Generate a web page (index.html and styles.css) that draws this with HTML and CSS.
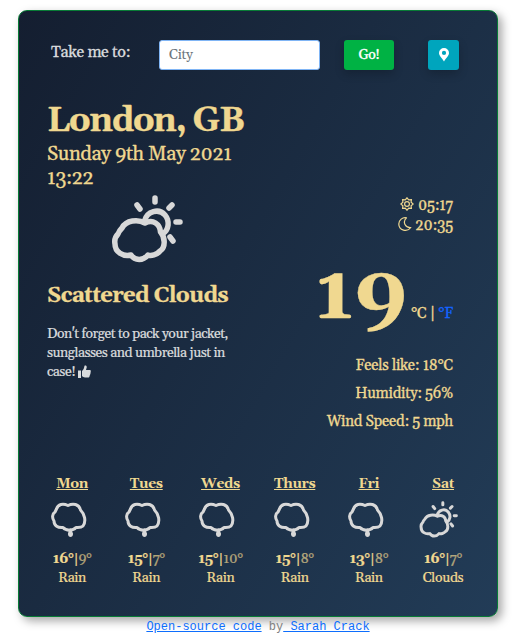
FILE: index.html
```html
<!DOCTYPE html>
<html lang="en">
<head>
<meta charset="utf-8">
<title>Weather</title>
<link rel="stylesheet" href="styles.css">
</head>
<body>
<svg class="defs" width="0" height="0">
  <symbol id="clouds" viewBox="0 0 72 68">
    <g fill="none" stroke="currentColor" stroke-width="5.500" stroke-linecap="round" stroke-linejoin="round">
      <path d="M11 33C15 25 27 24 34 28C42 24 49 29 49.500 37C54 42 55 52 49 56C46 60 40 61 37 60C32 66 24 66 20 60C12 62 4 57 4 49C3 44 5 41 7 39C8 36 9 35 11 33Z"/>
      <path d="M33.500 26C36 16 48 13 54 20C59 26 58 35 51.500 39"/>
      <path stroke-width="5.500" d="M44 3V7M26 10L29 14M61 10L58 13M65 27H69M59 42L62 46"/>
    </g>
  </symbol>
  <symbol id="rain" viewBox="0 0 36 35">
    <path fill="none" stroke="currentColor" stroke-width="3" stroke-linejoin="round" d="M5.500 7C7 2 12 1 17 3.500C22 1 28 2 29.500 8C33.500 12 35.500 19 32 24C30 26 27 25.500 25 25.500C22 29 15 29 12 25.500C7 26 3 24 3 19C1 16 1 12 4 10Z"/>
    <path fill="currentColor" d="M18.500 26.500H20L22 31.500C22.500 36 16.500 36 17 31.500Z"/>
  </symbol>
</svg>
<main class="card">
  <form class="search">
    <label for="city">Take me to:</label>
    <input id="city" type="text" placeholder="City">
    <button class="go" type="button">Go!</button>
    <button class="pin" type="button" aria-label="Current location"><svg width="10" height="14" viewBox="0 0 10 14"><path fill="#fff" fill-rule="evenodd" d="M5 0a5 5 0 0 1 5 5c0 3-3 5-5 8.500C3 10 0 8 0 5a5 5 0 0 1 5-5zM5 2.800a2.100 2.100 0 1 0 0 4.200a2.100 2.100 0 0 0 0-4.200z"/></svg></button>
  </form>
  <h1>London, GB</h1>
  <p class="date">Sunday 9th May 2021<br>13:22</p>
  <section class="now">
    <div class="left">
      <svg class="main-icon" width="72" height="68"><use href="#clouds"/></svg>
      <h2>Scattered Clouds</h2>
      <p class="tip">Don't forget to pack your jacket,<br>sunglasses and umbrella just in<br>case! <svg width="13" height="13" viewBox="0 0 13 13"><path fill="currentColor" d="M0 5.500h3V13H0zM4 6C6 4 6 3 6.500.7C8 0 9 1 8.700 2.500L8 5h3.500c1.500 0 1.700 1.500.9 2c.6.700.3 1.600-.3 2c.3.800 0 1.500-.6 1.800c.2 1-.5 1.700-1.500 1.700H7C5.500 12.500 5 11.500 4 11.300z"/></svg></p>
    </div>
    <div class="right">
      <div class="suntimes">
        <div><svg width="14" height="14" viewBox="0 0 14 14" fill="none" stroke="currentColor" stroke-width="1.200"><path d="M7 .8L8.700 2.900L11.400 2.600L11.100 5.300L13.200 7L11.100 8.700L11.400 11.400L8.700 11.100L7 13.200L5.300 11.100L2.600 11.400L2.900 8.700L.8 7L2.900 5.300L2.600 2.600L5.300 2.900Z"/><circle cx="7" cy="7" r="2.400"/></svg> 05:17</div>
        <div><svg width="14" height="14" viewBox="0 0 14 14" fill="none" stroke="currentColor" stroke-width="1.200" stroke-linejoin="round"><path d="M8.500.8C4.500 0 .8 3 .8 7c0 6.500 8.500 8.500 12 3.500C7.500 11 4 5 8.500.8Z"/></svg> 20:35</div>
      </div>
      <div class="temp"><strong>19</strong><span class="units">°C | <a>°F</a></span></div>
      <div class="details"><div>Feels like: 18°C</div><div>Humidity: 56%</div><div>Wind Speed: 5 mph</div></div>
    </div>
  </section>
  <section class="forecast">
    <div class="day"><h3>Mon</h3><svg class="r" width="36" height="35"><use href="#rain"/></svg><p><b>16°</b>|<i>9°</i></p><p>Rain</p></div>
    <div class="day"><h3>Tues</h3><svg class="r" width="36" height="35"><use href="#rain"/></svg><p><b>15°</b>|<i>7°</i></p><p>Rain</p></div>
    <div class="day"><h3>Weds</h3><svg class="r" width="36" height="35"><use href="#rain"/></svg><p><b>15°</b>|<i>10°</i></p><p>Rain</p></div>
    <div class="day"><h3>Thurs</h3><svg class="r" width="36" height="35"><use href="#rain"/></svg><p><b>15°</b>|<i>8°</i></p><p>Rain</p></div>
    <div class="day"><h3>Fri</h3><svg class="r" width="36" height="35"><use href="#rain"/></svg><p><b>13°</b>|<i>8°</i></p><p>Rain</p></div>
    <div class="day"><h3>Sat</h3><svg class="c" width="39" height="37"><use href="#clouds"/></svg><p><b>16°</b>|<i>7°</i></p><p>Clouds</p></div>
  </section>
</main>
<footer><a>Open-source code</a> by<a> Sarah Crack</a></footer>
</body>
</html>
```
FILE: styles.css
```css
* { box-sizing: border-box; margin: 0; padding: 0; }
body { background: #fff; padding: 10px 16px 0 18px; font-family: Georgia, Gelasio, "Liberation Serif", serif; font-size: 15px; color: #f0d890; overflow: hidden; }
.defs { display: block; }
.card { width: 480px; height: 607px; border: 1px solid #087b36; border-radius: 9px; background: linear-gradient(120deg, #141e30, #223c57); box-shadow: 4px 4px 10px rgba(0, 0, 0, .35); padding: 29px 28px 0; white-space: nowrap; }
.search { display: flex; height: 30px; color: #d9dbdd; }
.search label { width: 112px; padding-left: 4px; font-size: 16px; letter-spacing: -.35px; line-height: 24px; -webkit-text-stroke: .3px; }
.search input { width: 161px; height: 30px; border: 1px solid #80b5f5; border-radius: 3px; padding: 0 9px; font: 14px Georgia, Gelasio, "Liberation Serif", serif; letter-spacing: -.3px; background: #fff; }
.search input::placeholder { color: #6c757d; }
.search button { border: 0; border-radius: 3px; height: 30px; box-shadow: 0 4px 10px rgba(0, 0, 0, .2); display: flex; align-items: center; justify-content: center; }
.search .go { width: 50px; margin-left: 24px; background: #00b244; color: #fff; font: 14px Georgia, Gelasio, "Liberation Serif", serif; letter-spacing: -.4px; -webkit-text-stroke: .3px; }
.search .pin { width: 31px; margin-left: 34px; background: #00a5bd; }
h1 { margin-top: 27px; height: 45px; font-size: 34px; letter-spacing: -1.25px; line-height: 48px; -webkit-text-stroke: .4px; }
.date { font-size: 20px; letter-spacing: -.4px; line-height: 24px; height: 50px; -webkit-text-stroke: .3px; }
.now { display: flex; justify-content: space-between; height: 282px; padding-right: 16px; }
.main-icon { display: block; color: #d8d8d8; margin: 3px 0 0 64px; }
h2 { font-size: 22px; letter-spacing: -.65px; line-height: 28px; margin-top: 19px; -webkit-text-stroke: .3px; }
.tip { color: #d9dbdd; font-size: 14px; letter-spacing: -.52px; word-spacing: .1px; line-height: 19px; margin-top: 15px; -webkit-text-stroke: .2px; }
.tip svg { vertical-align: -2px; }
.right { text-align: right; -webkit-text-stroke: .3px; }
.suntimes { line-height: 20px; padding-top: 4px; letter-spacing: -.15px; }
.suntimes svg { vertical-align: -1px; }
.temp { display: flex; justify-content: flex-end; align-items: baseline; height: 86px; margin-top: 30px; line-height: 60px; letter-spacing: -.3px; }
.temp strong { font-size: 76px; letter-spacing: -1px; margin-right: 5px; transform: scaleX(1.09); transform-origin: right; }
.temp a { color: #1463ff; }
.details { line-height: 28px; letter-spacing: -.25px; }
.forecast { display: grid; grid-template-columns: repeat(6, 74.2px); margin-left: -12px; text-align: center; font-size: 14px; letter-spacing: -.35px; }
.day h3 { font-size: 14px; line-height: 20px; text-decoration: underline; }
.day svg { display: block; color: #d8d8d8; }
.day .r { margin: 8px 0 13px 16px; }
.day .c { margin: 7px 0 12px 13px; }
.day p { line-height: 18.500px; -webkit-text-stroke: .2px; }
.day i { font-style: normal; opacity: .7; }
footer { width: 480px; text-align: center; font: 12px/20px "Liberation Mono", monospace; color: #808080; }
footer a { color: #0d6efd; text-decoration: underline; }
```
